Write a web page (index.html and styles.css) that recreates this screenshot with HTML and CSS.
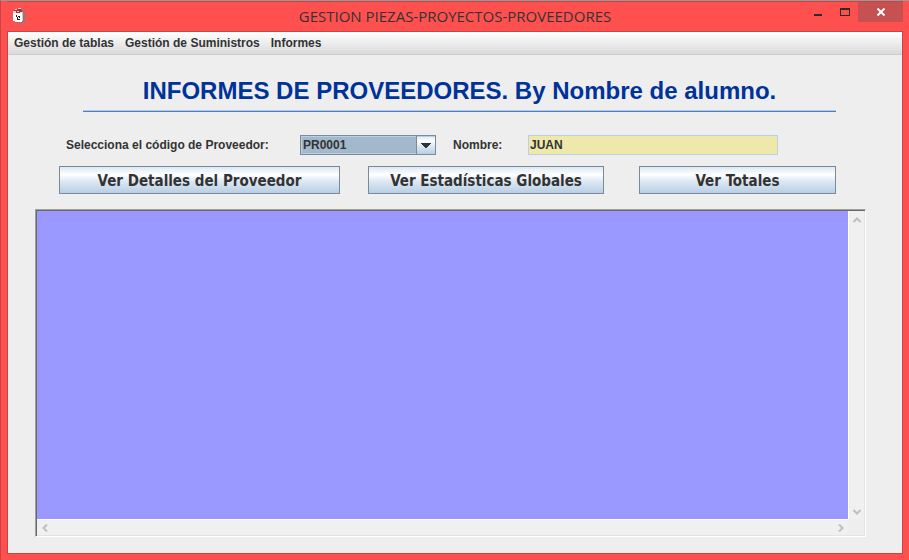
FILE: index.html
```html
<!DOCTYPE html>
<html lang="es">
<head>
    <meta charset="UTF-8">
    <meta name="viewport" content="width=device-width, initial-scale=1.0">
    <title>GESTION PIEZAS-PROYECTOS-PROVEEDORES</title>
    <link rel="stylesheet" href="styles.css">
</head>
<body>
    <header class="titlebar">
        <svg class="app-icon" width="12" height="16" viewBox="0 0 12 16" shape-rendering="crispEdges" aria-hidden="true">
            <path fill="#8d7a7a" d="M8 2h3v2h1v10h-1v1H4v-1h5z"/>
            <path fill="#c9c4c4" d="M9 4h1v9H9z"/>
            <path fill="#fff" d="M0 5h9v9H2v-1H0z"/>
            <path fill="#b03030" d="M1 2h2V1h5v1h1v3H1z"/>
            <path fill="#e6d6d6" d="M2 1h2v1H2zM5 0h3v1H5zM0 3h3v2H0zM4 3h2v1H4zM7 4h2v1H7z"/>
            <path fill="#222" d="M3 7h1v2H3zM4 9h1v3H4zM5 8h2v1H5zM5 11h2v1H5zM6 9h1v1H6z"/>
        </svg>
        <h1>GESTION PIEZAS-PROYECTOS-PROVEEDORES</h1>
        <div class="window-controls">
            <button type="button" class="win-btn" aria-label="Minimizar">
                <svg width="10" height="10" viewBox="0 0 10 10" shape-rendering="crispEdges"><path fill="#2b2b2b" d="M1 7h8v2H1z"/></svg>
            </button>
            <button type="button" class="win-btn" aria-label="Maximizar">
                <svg width="10" height="10" viewBox="0 0 10 10" shape-rendering="crispEdges"><path fill="#2b2b2b" fill-rule="evenodd" d="M0 1h10v8H0zM1 3v5h8V3z"/></svg>
            </button>
            <button type="button" class="win-btn win-close" aria-label="Cerrar">
                <svg width="8" height="8" viewBox="0 0 8 8"><path stroke="#fff" stroke-width="2" d="M0.500 0.500l7 7M7.500 0.500l-7 7"/></svg>
            </button>
        </div>
    </header>

    <div class="window">
        <nav class="menubar">
            <a href="#tablas">Gestión de tablas</a>
            <a href="#suministros">Gestión de Suministros</a>
            <a href="#informes">Informes</a>
        </nav>

        <main>
            <h2>INFORMES DE PROVEEDORES. By Nombre de alumno.</h2>

            <form class="panel">
                <div class="fields">
                    <label class="label-codigo" for="codigo">Selecciona el código de Proveedor:</label>
                    <div class="combo">
                        <select id="codigo">
                            <option>PR0001</option>
                        </select>
                        <svg class="combo-arrow" width="10" height="5" viewBox="0 0 10 5" shape-rendering="crispEdges" aria-hidden="true"><path fill="#333" d="M0 0h10v1H9v1H8v1H7v1H6v1H4V4H3V3H2V2H1V1H0z"/></svg>
                    </div>
                    <label class="label-nombre" for="nombre">Nombre:</label>
                    <input id="nombre" type="text" value="JUAN" readonly>
                </div>

                <div class="actions">
                    <button type="button">Ver Detalles del Proveedor</button>
                    <button type="button">Ver Estadísticas Globales</button>
                    <button type="button">Ver Totales</button>
                </div>
            </form>

            <div class="report">
                <div class="report-view"></div>
                <div class="scroll-v">
                    <svg width="8" height="6" viewBox="0 0 8 6"><path d="M0.500 5L4 1.500 7.500 5"/></svg>
                    <svg width="8" height="6" viewBox="0 0 8 6"><path d="M0.500 1L4 4.500 7.500 1"/></svg>
                </div>
                <div class="scroll-h">
                    <svg width="6" height="8" viewBox="0 0 6 8"><path d="M5 0.500L1.500 4 5 7.500"/></svg>
                    <svg width="6" height="8" viewBox="0 0 6 8"><path d="M1 0.500L4.500 4 1 7.500"/></svg>
                </div>
            </div>
        </main>
    </div>
</body>
</html>
```
FILE: styles.css
```css
:root {
    --frame: #ff5050;
    --frame-dark: #c94343;
    --panel: #eeeeee;
    --text: #333333;
    --button-border: #7a8a99;
    --metal: linear-gradient(#dde8f3, #ffffff 30%, #dde8f3 55%, #b8cfe5);
}

* {
    margin: 0;
    padding: 0;
    box-sizing: border-box;
}

body {
    min-height: 100vh;
    display: flex;
    flex-direction: column;
    padding: 0 6px 6px;
    background: var(--frame);
    border-top: 1px solid #999999;
    border-left: 1px solid var(--frame-dark);
    font-family: "Liberation Sans", Arial, sans-serif;
    font-size: 12px;
    font-weight: bold;
    color: var(--text);
}

.titlebar {
    height: 30px;
    display: grid;
    grid-template-columns: 1fr auto 1fr;
    align-items: start;
    border-top: 1px solid var(--frame-dark);
}

.app-icon {
    margin: 6px 0 0 6px;
}

.titlebar h1 {
    font-family: "Open Sans", "Segoe UI", sans-serif;
    font-size: 15px;
    font-weight: 400;
    line-height: 28px;
}

.window-controls {
    display: flex;
    justify-content: flex-end;
}

.win-btn {
    width: 27px;
    height: 20px;
    display: flex;
    align-items: center;
    justify-content: center;
    border: none;
    background: none;
}

.win-close {
    width: 45px;
    background: #c75050;
}

.window {
    flex: 1;
    display: flex;
    flex-direction: column;
    border: 1px solid var(--frame-dark);
    background: var(--panel);
}

.menubar {
    height: 23px;
    display: flex;
    align-items: center;
    gap: 11px;
    padding: 0 6px;
    background: linear-gradient(#ffffff, #dadada);
    border-bottom: 1px solid #cccccc;
}

.menubar a {
    color: var(--text);
    text-decoration: none;
}

main {
    flex: 1;
    display: flex;
    flex-direction: column;
    padding: 20px 36px 16px 27px;
}

/* two-tone separator under the title */
h2 {
    margin: 0 30px 0 48px;
    padding-bottom: 4px;
    border-bottom: 1px solid #0099ff;
    box-shadow: inset 0 -1px #ffafaf;
    font-size: 24px;
    line-height: 32px;
    text-align: center;
    color: #003399;
}

.panel {
    margin: 23px 30px 15px 24px;
}

.fields {
    display: flex;
    align-items: center;
    padding: 0 58px 0 7px;
}

.label-codigo {
    width: 234px;
}

.label-nombre {
    width: 75px;
    margin-left: 17px;
}

.combo {
    position: relative;
    width: 136px;
}

.combo select {
    display: block;
    width: 100%;
    height: 20px;
    padding-left: 2px;
    appearance: none;
    border: 1px solid var(--button-border);
    border-radius: 0;
    background: linear-gradient(90deg, #a3b8cc, #a3b8cc) left / calc(100% - 19px) 100% no-repeat, var(--metal);
    box-shadow: inset 1px 1px #b8cfe5, inset 0 -1px #b8cfe5;
    font: inherit;
    color: inherit;
}

.combo::after {
    content: "";
    position: absolute;
    top: 0;
    bottom: 0;
    right: 19px;
    width: 1px;
    background: var(--button-border);
}

.combo-arrow {
    position: absolute;
    top: 8px;
    right: 5px;
}

.fields input {
    flex: 1;
    min-width: 0;
    height: 20px;
    padding: 0 1px;
    border: 1px solid #b8cfe5;
    background: #eee8aa;
    font: inherit;
    color: inherit;
}

.actions {
    display: grid;
    grid-template-columns: 281fr 236fr 204fr;
    column-gap: 28px;
    margin-top: 11px;
}

.actions button {
    height: 28px;
    padding-top: 2px;
    border: 1px solid var(--button-border);
    background: var(--metal);
    font-family: "DejaVu Sans Condensed", Tahoma, "Noto Sans", sans-serif;
    font-size: 15px;
    font-weight: bold;
    color: var(--text);
}

.actions button:last-child {
    margin-left: 7px;
}

.report {
    flex: 1;
    display: grid;
    grid-template-columns: 1fr 16px;
    grid-template-rows: 1fr 16px;
    border: 1px solid;
    border-color: #a0a0a0 #ffffff #ffffff #a0a0a0;
    box-shadow: inset 1px 1px #696969, inset -1px -1px #e3e3e3;
    padding: 1px;
}

.report-view {
    background: #9999ff;
}

.scroll-v,
.scroll-h {
    display: flex;
    justify-content: space-between;
    align-items: center;
    background: #f0f0f0;
}

.scroll-v {
    flex-direction: column;
    padding: 6px 0 4px;
    border-left: 1px solid #ffffff;
}

.scroll-h {
    padding: 0 4px 0 5px;
    border-top: 1px solid #ffffff;
}

.report svg {
    fill: none;
    stroke: #bfbfbf;
    stroke-width: 2;
}
```
